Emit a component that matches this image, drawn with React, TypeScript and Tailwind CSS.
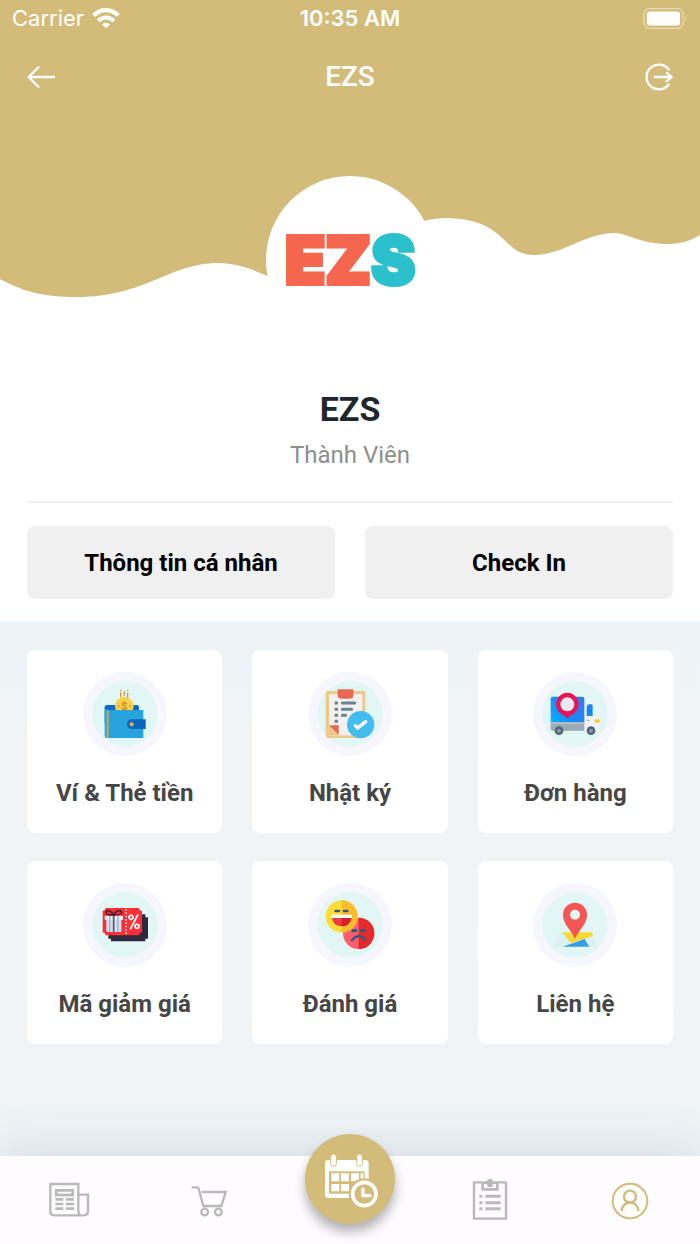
import type { ReactNode } from 'react'

function WifiIcon() {
  return (
    <svg viewBox="0 0 84 62" className="w-7 h-5" fill="none" stroke="currentColor" aria-hidden="true">
      <path d="M4 23 C26 1 58 1 80 23" strokeWidth="13" />
      <path d="M18 40 C32 26 52 26 66 40" strokeWidth="12" />
      <path d="M29 51 Q42 40 55 51 L42 62 Z" fill="currentColor" stroke="none" />
    </svg>
  )
}

function BatteryIcon() {
  return (
    <svg viewBox="0 0 135 64" className="w-[45px] h-[21px]" fill="none" aria-hidden="true">
      <rect x="2" y="2" width="119" height="60" rx="16" stroke="white" strokeOpacity="0.45" strokeWidth="4" />
      <rect x="11" y="11" width="101" height="42" rx="9" fill="white" />
      <path d="M127 23 Q134 32 127 41 Z" fill="white" fillOpacity="0.5" />
    </svg>
  )
}

function BackIcon() {
  return (
    <svg viewBox="0 0 84 66" className="w-7 h-[22px]" fill="none" stroke="currentColor" strokeWidth="7" aria-hidden="true">
      <path d="M84 33 H6 M36 2 L5 33 L36 64" />
    </svg>
  )
}

function LogoutIcon() {
  return (
    <svg viewBox="0 0 86 84" className="w-7 h-7" fill="none" stroke="currentColor" strokeWidth="7" strokeLinecap="round" aria-hidden="true">
      <path d="M73 19 A38 38 0 1 0 73 65" />
      <path d="M30 42 H82 M67 29 L82 42 L67 55" strokeLinejoin="round" />
    </svg>
  )
}

function WalletIcon() {
  return (
    <>
      <rect x="65" y="99" width="103" height="60" rx="7" fill="#0a6cc4" />
      <circle cx="124" cy="102" r="28" fill="#fdd04e" />
      <text x="124" y="113" textAnchor="middle" fontSize="32" fontWeight="700" fill="#c98a1c" className="font-['Roboto',sans-serif]">$</text>
      <circle cx="107" cy="103" r="3" fill="#d79a27" />
      <circle cx="141" cy="103" r="3" fill="#d79a27" />
      <path d="M113 61 V76 M124 58 V71 M134 62 V77" stroke="#d09a3c" strokeWidth="4" />
      <path d="M113 53 V57 M134 54 V58" stroke="#d09a3c" strokeWidth="4" />
      <path d="M65 106 Q67 114 76 114 H181 V198 H72 Q65 198 65 190 Z" fill="#27a4de" />
      <rect x="71" y="114" width="6" height="84" fill="#d0a458" />
      <path d="M188 142 H146 A14 14 0 0 0 146 171 H188 Z" fill="#0868be" />
      <circle cx="146" cy="157" r="6" fill="#f6b044" />
    </>
  )
}

function DiaryIcon() {
  return (
    <>
      <rect x="53" y="57" width="119" height="141" rx="7" fill="#edca88" />
      <rect x="63" y="66" width="100" height="124" fill="#f3f0f2" />
      <path d="M63 160 L92 190 H63 Z" fill="#edca88" />
      <path d="M63 160 H92 V189 Z" fill="#e66a51" />
      <path d="M89 52 H136 V70 Q136 80 126 80 H99 Q89 80 89 70 Z" fill="#e66a51" />
      <path d="M80 93 H90 M80 112 H90 M80 130 H90 M80 148 H90" stroke="#67858f" strokeWidth="9" />
      <path d="M103 93 H140 M103 112 H131 M103 130 H113" stroke="#67858f" strokeWidth="9" strokeLinecap="round" />
      <circle cx="158" cy="158" r="41" fill="#43bdee" />
      <path d="M142 161 L149 168 L173 149" fill="none" stroke="white" strokeWidth="10" strokeLinecap="round" />
    </>
  )
}

function TruckIcon() {
  return (
    <>
      <defs>
        <linearGradient id="cargo" x1="0" y1="1" x2="1" y2="0.4">
          <stop offset="0" stopColor="#06b4ff" />
          <stop offset="0.5" stopColor="#168cf8" />
          <stop offset="1" stopColor="#2f7cf0" />
        </linearGradient>
      </defs>
      <path d="M154 98 Q160 90 168 90 H175 Q180 90 181 97 L184 132 H193 Q200 133 200 142 V172 Q200 177 194 177 H154 Z" fill="#f1f2f7" />
      <rect x="53" y="74" width="101" height="80" rx="6" fill="url(#cargo)" />
      <path d="M53 151 H154 V176 H59 Q53 176 53 170 Z" fill="#9aa9b6" />
      <path d="M53 151 H154 V157 H53 Z" fill="#b4c0ca" />
      <path d="M161 104 Q162 97 169 97 H176 Q179 98 179 103 V132 H161 Z" fill="#1688ee" />
      <path d="M163 145 H169" stroke="#8cb3e8" strokeWidth="4" />
      <rect x="185" y="142" width="15" height="10" rx="3" fill="#ffca19" />
      <circle cx="78" cy="176" r="13" fill="#4d6472" />
      <circle cx="78" cy="176" r="6" fill="#8b9dab" />
      <circle cx="174" cy="176" r="13" fill="#4d6472" />
      <circle cx="174" cy="176" r="6" fill="#8b9dab" />
      <path d="M103 139 L90 128 A34 34 0 1 1 116 128 Z" fill="#e91555" />
      <circle cx="103" cy="97" r="21" fill="#e9e9f2" />
    </>
  )
}

function CouponIcon() {
  return (
    <>
      <path d="M84 94 H187 V103 H195 V167 H187 V175 H84 V167 H76 V103 H84 Z" fill="#30283f" />
      <path d="M68 75 H168 Q169 84 177 84 V148 Q169 149 168 157 H68 Q67 149 59 148 V84 Q67 83 68 75 Z" fill="#fb3036" />
      <path d="M129 78 V157" stroke="#ffd9d9" strokeWidth="5" strokeDasharray="5 5" />
      <rect x="70" y="108" width="45" height="39" rx="3" fill="#d4dfef" />
      <rect x="65" y="98" width="55" height="13" rx="3" fill="#e9eff8" />
      <path d="M80 100 V147 M105 100 V147" stroke="#9cb0ce" strokeWidth="4" />
      <path d="M92 98 V147" stroke="#5c5369" strokeWidth="5" />
      <path d="M92 96 C84 80 66 80 69 90 C71 96 84 96 92 96 C100 96 113 96 116 90 C118 80 100 80 92 96 Z" fill="none" stroke="#4a2230" strokeWidth="5" />
      <g stroke="white" strokeWidth="5" fill="none">
        <circle cx="144" cy="103" r="6" />
        <circle cx="162" cy="130" r="6" />
        <path d="M164 96 L143 137" strokeLinecap="round" />
      </g>
    </>
  )
}

function ReviewIcon() {
  return (
    <>
      <circle cx="152" cy="151" r="47" fill="#fb5f6d" />
      <path d="M152 104 A47 47 0 0 1 152 198 Z" fill="#e52a2e" />
      <path d="M134 143 H144 M159 143 H169" stroke="#31577e" strokeWidth="8" strokeLinecap="round" />
      <path d="M132 171 Q152 148 172 171" fill="none" stroke="#31577e" strokeWidth="7" strokeLinecap="round" />
      <circle cx="101" cy="100" r="48" fill="#fddc36" />
      <path d="M101 52 A48 48 0 0 1 101 148 Z" fill="#fbbc2b" />
      <path d="M83 84 H93 M108 84 H118" stroke="#31577e" strokeWidth="8" strokeLinecap="round" />
      <path d="M71 101 H131 Q127 130 101 130 Q75 130 71 101 Z" fill="#ee3b40" />
      <path d="M101 101 H131 Q127 130 101 130 Z" fill="#d91f2b" />
      <rect x="70" y="95" width="62" height="10" rx="4" fill="white" />
    </>
  )
}

function ContactIcon() {
  return (
    <>
      <path d="M76 149 H174 L193 191 H61 Z" fill="#dcf0f3" />
      <path d="M88 148 H175 L181 158 L114 180 Z" fill="#f8d92f" />
      <path d="M89 191 L155 168 L169 191 Z" fill="#389fe6" />
      <path d="M126 168 C117 142 90 126 90 95 A36 36 0 0 1 162 95 C162 126 135 142 126 168 Z" fill="#f65555" />
      <circle cx="126" cy="95" r="15" fill="#e4f7f5" />
    </>
  )
}

function NewsIcon() {
  return (
    <>
      <path d="M4 15 H88 V97 Q89 109 98 109 H16 Q4 109 4 97 Z" strokeWidth="7" />
      <path d="M88 47 H117 V97 Q117 109 104 109 H98" strokeWidth="7" />
      <rect x="22" y="34" width="49" height="14" strokeWidth="8" />
      <path d="M19 61 H43 M19 75 H43 M19 89 H43 M51 61 H75 M51 75 H75 M51 89 H75" strokeWidth="8" />
    </>
  )
}

function CartIcon() {
  return (
    <>
      <path d="M8 25 H24 Q28 25 29 29 L43 81 H97 L110 39 H38" strokeWidth="7" />
      <circle cx="47" cy="99" r="10" strokeWidth="7" />
      <circle cx="88" cy="99" r="10" strokeWidth="7" />
    </>
  )
}

function TasksIcon() {
  return (
    <>
      <path d="M15 10 H111 V119 H15 Z" strokeWidth="7" />
      <path d="M41 12 V31 H85 V12" strokeWidth="8" />
      <path d="M42 9 H53 Q54 -1 63 -1 Q72 -1 73 9 H84 V15 H73 Q70 15 70 24 H56 Q56 15 53 15 H42 Z" fill="currentColor" stroke="none" />
      <path d="M31 52 H40 M31 71 H40 M31 89 H40 M49 52 H95 M49 71 H95 M49 89 H95" strokeWidth="9" />
    </>
  )
}

function UserIcon() {
  return (
    <>
      <circle cx="63" cy="66" r="52" strokeWidth="6" />
      <circle cx="63" cy="53" r="18" strokeWidth="7" />
      <path d="M38 96 C39 62 87 62 88 96" strokeWidth="7" />
    </>
  )
}

function CalendarIcon() {
  return (
    <svg viewBox="0 0 270 270" className="w-full h-full" aria-hidden="true">
      <rect x="60" y="78" width="131" height="114" rx="9" fill="white" />
      <rect x="72" y="112" width="107" height="67" fill="#d3bb79" />
      <path d="M79 118 h24 v24 h-24 z M108 118 h24 v24 h-24 z M138 118 h24 v24 h-24 z M167 118 h8 v24 h-8 z M79 150 h24 v22 h-24 z M108 150 h24 v22 h-24 z" fill="white" />
      <rect x="77" y="60" width="17" height="37" rx="8" fill="white" stroke="#d3bb79" strokeWidth="3" />
      <rect x="155" y="60" width="17" height="37" rx="8" fill="white" stroke="#d3bb79" strokeWidth="3" />
      <circle cx="178" cy="180" r="47" fill="#d3bb79" />
      <circle cx="178" cy="180" r="35" fill="none" stroke="white" strokeWidth="11" />
      <path d="M174 165 V185 H195" fill="none" stroke="white" strokeWidth="10" strokeLinecap="round" strokeLinejoin="round" />
    </svg>
  )
}

const services: { label: string; icon: ReactNode }[] = [
  { label: 'Ví & Thẻ tiền', icon: <WalletIcon /> },
  { label: 'Nhật ký', icon: <DiaryIcon /> },
  { label: 'Đơn hàng', icon: <TruckIcon /> },
  { label: 'Mã giảm giá', icon: <CouponIcon /> },
  { label: 'Đánh giá', icon: <ReviewIcon /> },
  { label: 'Liên hệ', icon: <ContactIcon /> },
]

function TabLink({ label, active, children }: { label: string; active?: boolean; children: ReactNode }) {
  return (
    <a href="#" aria-label={label} className={active ? 'flex justify-center text-[#d3bb79]' : 'flex justify-center text-[#b9b9b9]'}>
      <svg viewBox="0 0 126 126" className="w-[42px] h-[42px] overflow-visible" fill="none" stroke="currentColor" aria-hidden="true">
        {children}
      </svg>
    </a>
  )
}

export default function App() {
  return (
    <div className="min-h-screen flex flex-col bg-white font-['Roboto',sans-serif]">
      <header className="bg-[#d3bb79] text-white">
        {/* Status bar */}
        <div className="grid grid-cols-3 items-center h-9 px-3 font-['Inter',sans-serif] text-[22px] leading-9">
          <div className="flex items-center gap-2">
            <span>Carrier</span>
            <WifiIcon />
          </div>
          <span className="text-center font-semibold">10:35 AM</span>
          <div className="flex justify-end">
            <BatteryIcon />
          </div>
        </div>

        {/* Title bar */}
        <div className="grid grid-cols-3 items-center h-[82px] px-[27px]">
          <button aria-label="Back" className="justify-self-start">
            <BackIcon />
          </button>
          <h1 className="text-center text-[28px] leading-9 font-medium">EZS</h1>
          <button aria-label="Log out" className="justify-self-end">
            <LogoutIcon />
          </button>
        </div>

        <svg viewBox="0 0 700 100" preserveAspectRatio="none" className="block w-full h-[100px] mt-[82px]" aria-hidden="true">
          <path
            d="M0 79 C24 92 45 97 77 97 C145 97 170 63 218 63 C262 63 280 96 330 80 C375 66 390 18 447 18 C510 20 500 55 535 55 C562 55 585 33 615 33 C630 34 640 44 668 44 C682 44 692 40 700 35 V101 H0 Z"
            fill="white"
          />
        </svg>
      </header>

      <main className="flex-1 flex flex-col">
        <section className="px-[27px] pb-[23px] flex flex-col items-center">
          <div className="relative -mt-[124px] w-[168px] h-[168px] rounded-full bg-white flex items-center justify-center font-['Inter',sans-serif] text-[66px] leading-none font-black text-[#f6654e] [-webkit-text-stroke:4px_currentColor]">
            <span>EZ</span>
            <span className="text-[#2cc0cd]">S</span>
          </div>
          <h2 className="mt-[43px] text-[34px] leading-[44px] font-bold text-[#20262c]">EZS</h2>
          <p className="mt-2 text-2xl text-[#8e8e8e]">Thành Viên</p>
          <hr className="mt-[30px] w-full border-t-2 border-[#efefef]" />
          <div className="mt-[23px] w-full grid grid-cols-2 gap-[30px] text-2xl font-bold text-black">
            <button className="h-[73px] rounded-lg bg-[#f0f0f0]">Thông tin cá nhân</button>
            <button className="h-[73px] rounded-lg bg-[#f0f0f0]">Check In</button>
          </div>
        </section>

        <section className="flex-1 px-[27px] pt-7 pb-28 bg-linear-to-b from-[#edf3f7] via-[#f3f4f5] via-60% to-[#edf3f7]">
          <div className="grid grid-cols-3 gap-x-[30px] gap-y-7">
            {services.map(({ label, icon }) => (
              <a key={label} href="#" className="flex flex-col items-center h-[183px] pt-[22px] rounded-lg bg-white">
                <svg viewBox="0 0 252 252" className="w-[84px] h-[84px]" aria-hidden="true">
                  <circle cx="126" cy="126" r="126" fill="#f6f7fe" />
                  <circle cx="126" cy="126" r="98" fill="#e2f6f5" />
                  {icon}
                </svg>
                <span className="mt-[21px] text-2xl font-bold text-[#464646]">{label}</span>
              </a>
            ))}
          </div>
        </section>
      </main>

      {/* Bottom tabs */}
      <nav className="relative grid grid-cols-5 items-center h-[88px] bg-[#fefcfe] shadow-[0_-6px_50px_rgba(60,70,80,0.13)]">
        <TabLink label="News">
          <NewsIcon />
        </TabLink>
        <TabLink label="Shop">
          <CartIcon />
        </TabLink>
        <a href="#" aria-label="Booking" className="justify-self-center self-start -mt-[22px] w-[90px] h-[90px] rounded-full bg-[#d3bb79] shadow-[0_8px_12px_rgba(0,0,0,0.3)]">
          <CalendarIcon />
        </a>
        <TabLink label="Orders">
          <TasksIcon />
        </TabLink>
        <TabLink label="Account" active>
          <UserIcon />
        </TabLink>
      </nav>
    </div>
  )
}
